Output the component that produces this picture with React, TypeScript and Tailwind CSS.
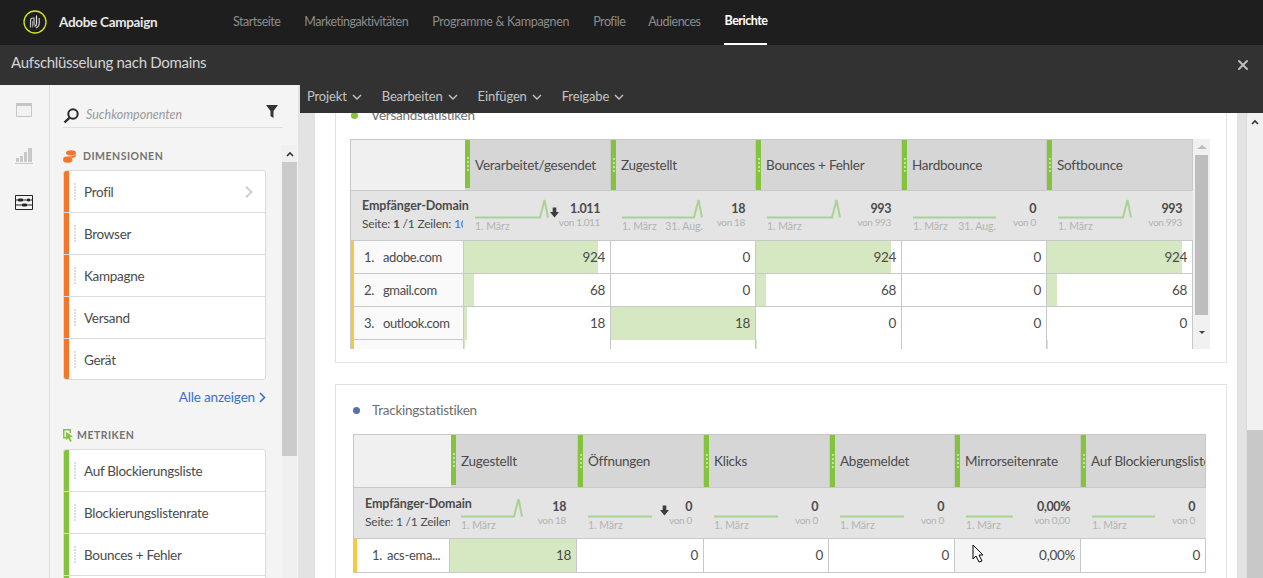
import React from "react";
import { X } from "lucide-react";

const Dots = () => (
  <div className="flex flex-col gap-[1px]">
    {[0, 1, 2, 3, 4, 5].map((i) => (
      <span key={i} className="block h-[2px] w-[2px] bg-[#dcdcdc]" />
    ))}
  </div>
);

const Chev = () => (
  <svg width="10" height="6" viewBox="0 0 10 6" fill="none" className="block">
    <path d="M1 1l4 4 4-4" stroke="#c4c4c4" strokeWidth="1.4" />
  </svg>
);

const SideItem = ({ label, bar, chevron, first, last }: { label: string; bar: string; chevron?: boolean; first?: boolean; last?: boolean }) => (
  <div className={`flex items-stretch bg-white ${first || last ? "h-[41px]" : "h-[42px]"} ${first ? "" : "border-t border-[#dcdcdc]"}`}>
    <div className={`w-[5px] ${bar}`} />
    <div className="ml-[5px] flex items-center">
      <Dots />
    </div>
    <div className="ml-2 flex flex-1 items-center pt-[2px] text-[13.5px] tracking-[-0.3px] text-[#4b4b4b]">{label}</div>
    {chevron && (
      <div className="flex items-center pr-[12px]">
        <svg width="8" height="12" viewBox="0 0 8 12" fill="none">
          <path d="M1 .8L6.4 6 1 11.2" stroke="#cfcfcf" strokeWidth="2" />
        </svg>
      </div>
    )}
  </div>
);

const Spark = ({ w, flat }: { w: number; flat?: boolean }) => (
  <svg width={w} height="20" viewBox={`0 0 ${w} 20`} fill="none" className="block">
    <path
      d={flat ? `M0 18.5H${w}` : `M0 18.5H${w - 9}L${w - 4.5} 1L${w - 1} 18.5`}
      stroke="#a9d293"
      strokeWidth="2"
    />
  </svg>
);

const HeadCell = ({ label, short }: { label: string; short?: boolean }) => (
  <div className="flex items-stretch overflow-hidden border-r border-[#c8c8c8] bg-[#d6d6d6]">
    <div className={`flex w-[5px] shrink-0 items-center justify-center bg-[#84c43c] ${short ? "mb-[2px]" : ""}`}>
      <div className="flex flex-col gap-[2px]">
        {[0, 1, 2, 3].map((i) => (
          <span key={i} className="block h-[2px] w-[2px] rounded-full bg-[#d9ecc5]" />
        ))}
      </div>
    </div>
    <div className="flex flex-1 items-center whitespace-nowrap pl-[5px] text-[13.5px] tracking-[-0.25px] text-[#4b4b4b]">{label}</div>
  </div>
);

type Sum = {
  w: number;
  value: string;
  von: string;
  pad: string;
  flat?: boolean;
  end?: boolean;
  arrow?: boolean;
};

const SumCell = ({ s, low }: { s: Sum; low?: boolean }) => (
  <div className={`flex justify-between ${s.pad}`}>
    <div className={low ? "pt-[10px]" : "pt-[8px]"} style={{ width: s.w }}>
      <Spark w={s.w} flat={s.flat} />
      <div className="flex justify-between whitespace-nowrap text-[10.5px] leading-[14px] text-[#b3b3b3]">
        <span>1. März</span>
        {s.end && <span>31. Aug.</span>}
      </div>
    </div>
    <div className="flex items-start">
      {s.arrow && (
        <svg width="9" height="11" viewBox="0 0 10 11" className={low ? "mt-[17px]" : "mt-[16px]"} fill="#3c3c3c">
          <path d="M3 0h4v5h3L5 11 0 5h3z" />
        </svg>
      )}
      <div className={`whitespace-nowrap text-right ${low ? "pt-[12px]" : "pt-[11px]"}`}>
        <div className="text-[12.5px] font-bold leading-[14px] tracking-[-0.4px] text-[#4b4b4b]">{s.value}</div>
        <div className="text-[10px] leading-[12px] tracking-[-0.35px] text-[#b3b3b3]">{s.von}</div>
      </div>
    </div>
  </div>
);

const Num = ({ v, pct, full, bg, nb }: { v: string; pct?: number; full?: boolean; bg?: string; nb?: boolean }) => (
  <div className={`relative flex items-center justify-end border-r border-[#c8c8c8] pr-[5px] text-[13.5px] tracking-[-0.3px] text-[#4b4b4b] ${nb ? "" : "border-b"} ${bg ?? "bg-white"}`}>
    {pct ? <div className="absolute inset-y-0 left-0 bg-[#d5e8c2]" style={{ width: pct }} /> : null}
    {full ? <div className="absolute inset-0 bg-[#d5e8c2]" /> : null}
    <span className="relative">{v}</span>
  </div>
);

const RowLabel = ({ n, name }: { n: string; name: string }) => (
  <div className="flex items-stretch border-b border-r border-[#c8c8c8] bg-[#fafafa]">
    <div className="w-[3px] bg-[#fcc73c]" />
    <div className="flex flex-1 items-center pl-[10px] pt-[2px] text-[13px] tracking-[-0.4px] text-[#4b4b4b]">
      <span className="w-[19px]">{n}</span>
      <span>{name}</span>
    </div>
  </div>
);

const VBar = () => (
  <div className="flex w-[17px] shrink-0 flex-col bg-[#f1f1f1]">
    <div className="flex h-[16px] items-center justify-center">
      <div className="h-0 w-0 border-x-[5px] border-b-[4px] border-x-transparent border-b-[#bdbdbd]" />
    </div>
    <div className="mx-[2px] h-[160px] bg-[#bdbdbd]" />
    <div className="flex flex-1 items-center justify-center">
      <div className="h-0 w-0 border-x-[3px] border-t-[3px] border-x-transparent border-t-[#444]" />
    </div>
  </div>
);

const table1: Sum[] = [
  { w: 74, value: "1.011", von: "von 1.011", arrow: true, pad: "pl-[10px] pr-[11px]" },
  { w: 81, value: "18", von: "von 18", end: true, pad: "pl-[11px] pr-[11px]" },
  { w: 74, value: "993", von: "von 993", pad: "pl-[11px] pr-[11px]" },
  { w: 83, value: "0", von: "von 0", flat: true, end: true, pad: "pl-[11px] pr-[11px]" },
  { w: 74, value: "993", von: "von 993", pad: "pl-[11px] pr-[11px]" },
];

const table2: Sum[] = [
  { w: 62, value: "18", von: "von 18", pad: "pl-[10px] pr-[12px]" },
  { w: 64, value: "0", von: "von 0", flat: true, arrow: true, pad: "pl-[10px] pr-[12px]" },
  { w: 64, value: "0", von: "von 0", flat: true, pad: "pl-[10px] pr-[12px]" },
  { w: 64, value: "0", von: "von 0", flat: true, pad: "pl-[10px] pr-[11px]" },
  { w: 47, value: "0,00%", von: "von 0,00", flat: true, pad: "pl-[11px] pr-[11px]" },
  { w: 63, value: "0", von: "von 0", flat: true, pad: "pl-[11px] pr-[11px]" },
];

export default function App() {
  return (
    <div className="relative flex h-[578px] w-[1263px] flex-col overflow-hidden bg-white font-['Lato',sans-serif]">
      {/* top bar */}
      <header className="flex h-[45px] shrink-0 items-center bg-[#1e1e1e]">
        <svg width="26" height="26" viewBox="0 0 26 26" className="ml-[22px]" fill="none">
          <circle cx="13" cy="12" r="11" stroke="#d2e41e" strokeWidth="1.3" />
          <path d="M8.5 17.5V10.5Q8.5 8 11 8H12V15.5" stroke="#c8c8c8" strokeWidth="1.2" />
          <path d="M10.5 17.5V11" stroke="#8a8a8a" strokeWidth="1" />
          <path d="M14.5 5.5V13.5Q14.5 16 12.5 16.5" stroke="#e2e2e2" strokeWidth="1.2" />
          <path d="M17.2 8V13.5Q17.2 16.5 14 18" stroke="#c8c8c8" strokeWidth="1.2" />
        </svg>
        <span className="ml-[11px] w-[174px] text-[13.5px] font-bold tracking-[-0.3px] text-[#e8e8e8]">Adobe Campaign</span>
        <nav className="flex h-full items-center gap-6 text-[12.5px] tracking-[-0.5px] text-[#8c8c8c]">
          <span>Startseite</span>
          <span>Marketingaktivitäten</span>
          <span className="tracking-[-0.3px]">Programme &amp; Kampagnen</span>
          <span>Profile</span>
          <span className="-ml-[1px]">Audiences</span>
          <span className="flex h-full items-center border-b-2 border-white font-bold text-white">Berichte</span>
        </nav>
      </header>

      {/* title */}
      <div className="flex h-[40px] shrink-0 items-center justify-between bg-[#323232] pl-[11px] pr-[12px]">
        <span className="pb-[6px] text-[15px] tracking-[-0.3px] text-[#d4d4d4]">Aufschlüsselung nach Domains</span>
        <X size={16} strokeWidth={3} className="text-[#bdbdbd]" />
      </div>

      <div className="flex min-h-0 flex-1">
        {/* rail */}
        <aside className="flex w-[50px] shrink-0 flex-col items-center border-r border-[#dedede] bg-[#f4f4f4] pr-[1px]">
          <svg width="16" height="14" viewBox="0 0 16 14" className="mt-[18px]" fill="none">
            <path d="M.5.5h15v13H.5z" stroke="#c6c6c6" fill="#f2f2f2" />
            <path d="M0 0h16v3H0z" fill="#c6c6c6" />
          </svg>
          <svg width="18" height="16" viewBox="0 0 18 16" className="mt-[31px]" fill="#c9c9c9">
            <rect x="1" y="10" width="3" height="4" />
            <rect x="5" y="8" width="3" height="6" />
            <rect x="9" y="4" width="3" height="10" />
            <rect x="13" y="0" width="4" height="14" />
            <rect x="0" y="15" width="18" height="1" />
          </svg>
          <svg width="18" height="15" viewBox="0 0 18 15" className="mt-[31px]" fill="none" stroke="#222">
            <path d="M.5.5h17v14H.5z" />
            <path d="M1 5h16M1 10h16" />
            <rect x="3" y="3.5" width="5" height="3" rx="1.2" fill="#222" stroke="none" />
            <rect x="12" y="3.5" width="3" height="3" rx="1.2" fill="#222" stroke="none" />
            <rect x="7" y="8.5" width="5" height="3" rx="1.2" fill="#222" stroke="none" />
          </svg>
        </aside>

        {/* components */}
        <aside className="flex w-[248px] shrink-0 bg-[#f4f4f4]">
          <div className="w-[232px] shrink-0 pl-[13px]">
            <div className="flex h-[43px] w-[220px] items-center justify-between border-b border-[#e0e0e0] pt-[15px]">
              <div className="flex items-center gap-[7px]">
                <svg width="16" height="16" viewBox="0 0 16 16" fill="none" className="mt-[4px]">
                  <circle cx="10" cy="6" r="4.7" stroke="#2c2c2c" strokeWidth="2" />
                  <path d="M6.4 9.8L1.5 14.5" stroke="#2c2c2c" strokeWidth="2.4" />
                </svg>
                <span className="pt-[3px] text-[12.5px] italic text-[#9a9a9a]">Suchkomponenten</span>
              </div>
              <svg width="12" height="13" viewBox="0 0 12 13" className="mb-[5px] mr-[5px]" fill="#333">
                <path d="M0 0h12L7.5 6v7l-3-2V6z" />
              </svg>
            </div>
            <div className="mt-[21px] flex h-[14px] items-center gap-[7px]">
              <svg width="13" height="13" viewBox="0 0 13 13" fill="#f3762a">
                <ellipse cx="8" cy="2.8" rx="5" ry="2.6" />
                <path d="M5 6.8C6.5 6.8 8 7.2 9 8c2.4-.2 3.9-1 3.9-2.2V4.2C12 5.4 10.2 6 8 6 6.800 6 5.800 5.800 5 5.500z" />
                <path d="M0 8.500C0 7.200 2 6.300 4.700 6.300S9.400 7.200 9.400 8.500v2C9.400 12 7.500 13 4.700 13S0 12 0 10.500z" stroke="#f4f4f4" strokeWidth="0.4" />
              </svg>
              <span className="pt-[2px] text-[10.5px] font-bold tracking-[0.5px] text-[#737373]">DIMENSIONEN</span>
            </div>
            <div className="mt-[7px] w-[203px] overflow-hidden rounded-[3px] border border-[#dcdcdc]">
              <SideItem label="Profil" bar="bg-[#f3762a]" chevron first />
              <SideItem label="Browser" bar="bg-[#f3762a]" />
              <SideItem label="Kampagne" bar="bg-[#f3762a]" />
              <SideItem label="Versand" bar="bg-[#f3762a]" />
              <SideItem label="Gerät" bar="bg-[#f3762a]" last />
            </div>
            <div className="mt-[7px] flex h-[20px] w-[203px] items-center justify-end gap-[4px] text-[13.5px] tracking-[-0.15px] text-[#3a6fd0]">
              Alle anzeigen
              <svg width="7" height="11" viewBox="0 0 7 11" fill="none">
                <path d="M1 1l4.500 4.500L1 10" stroke="#3a6fd0" strokeWidth="1.6" />
              </svg>
            </div>
            <div className="mt-[21px] flex h-[14px] items-center gap-[4px]">
              <svg width="10" height="13" viewBox="0 0 10 13" fill="#84c43c">
                <path d="M0 0h8v4H6.500V1.500h-5V8H3.500v1.500H0z" />
                <path d="M2.800 2.800L9.800 7.600 6.800 8.400 8.800 12 7.200 13 5.300 9.300 3.200 11.200z" />
              </svg>
              <span className="pt-[2px] text-[10.5px] font-bold tracking-[0.5px] text-[#737373]">METRIKEN</span>
            </div>
            <div className="mt-[7px] w-[203px] overflow-hidden rounded-[3px] border border-[#dcdcdc]">
              <SideItem label="Auf Blockierungsliste" bar="bg-[#84c43c]" first />
              <SideItem label="Blockierungslistenrate" bar="bg-[#84c43c]" />
              <SideItem label="Bounces + Fehler" bar="bg-[#84c43c]" />
              <SideItem label="" bar="bg-[#84c43c]" />
            </div>
          </div>
          <div className="mt-[60px] flex w-[15px] shrink-0 flex-col bg-[#f0f0f0]">
            <div className="flex h-[17px] items-center justify-center">
              <svg width="8" height="6" viewBox="0 0 8 6" fill="none">
                <path d="M1 5l3-3 3 3" stroke="#333" strokeWidth="1.6" />
              </svg>
            </div>
            <div className="h-[294px] bg-[#cbcbcb]" />
          </div>
        </aside>

        <div className="w-[2px] shrink-0 bg-[#e3e3e3]" />

        {/* right */}
        <div className="flex min-w-0 flex-1 flex-col">
          <div className="flex h-[28px] shrink-0 items-center gap-[20px] bg-[#323232] pb-[5px] pl-[7px] text-[13px] tracking-[-0.15px] text-[#c4c4c4]">
            <span className="flex items-center gap-[5px]">Projekt <Chev /></span>
            <span className="flex items-center gap-[5px]">Bearbeiten <Chev /></span>
            <span className="flex items-center gap-[5px]">Einfügen <Chev /></span>
            <span className="flex items-center gap-[5px]">Freigabe <Chev /></span>
          </div>
          <div className="flex min-h-0 flex-1">
            <div className="w-[15px] shrink-0 bg-[#e3e3e3]" />
            <main className="w-[922px] shrink-0 overflow-hidden bg-white">
              {/* card 1 */}
              <section className="-mt-[24px] ml-[20px] mr-[10px] h-[274px] border border-[#e2e2e2] pl-[14px] pt-[17px]">
                <div className="flex h-[16px] items-center gap-[13px] text-[13.5px] tracking-[-0.25px] text-[#6e6e6e]">
                  <span className="ml-[1px] block h-[7px] w-[7px] rounded-full bg-[#84c43c]" />
                  Versandstatistiken
                </div>
                <div className="mt-[16px] flex">
                  <div className="w-[843px] border-l border-t border-[#c8c8c8]">
                    <div className="grid h-[51px] grid-cols-[114px_146px_145px_146px_145px_146px] border-b border-[#c8c8c8]">
                      <div className="bg-[#f0f0f0]" />
                      {["Verarbeitet/gesendet", "Zugestellt", "Bounces + Fehler", "Hardbounce", "Softbounce"].map((h, i) => (
                        <HeadCell key={h} label={h} short={i === 0} />
                      ))}
                    </div>
                    <div className="grid h-[50px] grid-cols-[114px_146px_145px_146px_145px_146px] border-b border-[#c8c8c8] bg-[#e4e4e4]">
                      <div className="whitespace-nowrap pl-[11px] pt-[7px]">
                        <div className="text-[12.5px] font-bold leading-[16px] tracking-[-0.1px] text-[#4b4b4b]">Empfänger-Domain</div>
                        <div className="w-[101px] overflow-hidden text-[12px] leading-[20px] tracking-[-0.2px] text-[#4b4b4b]">
                          Seite: <b>1</b> /1 Zeilen: <span className="text-[#3a6fd0]">10</span>
                        </div>
                      </div>
                      {table1.map((s, i) => (
                        <SumCell key={i} s={s} />
                      ))}
                    </div>
                    <div className="grid h-[108px] grid-cols-[113px_147px_145px_146px_145px_146px] grid-rows-[33px_33px_33px_14px] overflow-hidden">
                      <RowLabel n="1." name="adobe.com" />
                      <Num v="924" pct={134} />
                      <Num v="0" />
                      <Num v="924" pct={135} />
                      <Num v="0" />
                      <Num v="924" pct={135} />

                      <RowLabel n="2." name="gmail.com" />
                      <Num v="68" pct={10} />
                      <Num v="0" />
                      <Num v="68" pct={10} />
                      <Num v="0" />
                      <Num v="68" pct={10} />

                      <RowLabel n="3." name="outlook.com" />
                      <Num v="18" pct={3} nb />
                      <Num v="18" full nb />
                      <Num v="0" nb />
                      <Num v="0" nb />
                      <Num v="0" nb />

                      <div className="flex border-r border-[#c8c8c8] bg-[#fafafa]">
                        <div className="w-[3px] bg-[#fcc73c]" />
                      </div>
                      <Num v="" pct={1} nb />
                      <Num v="" nb />
                      <Num v="" pct={1} nb />
                      <Num v="" nb />
                      <Num v="" pct={1} nb />
                    </div>
                  </div>
                  <VBar />
                </div>
              </section>

              {/* card 2 */}
              <section className="ml-[20px] mr-[10px] mt-[21px] h-[300px] border border-[#e2e2e2] pl-[17px] pt-[17px]">
                <div className="flex h-[16px] items-center gap-[12px] text-[13.5px] tracking-[-0.25px] text-[#6e6e6e]">
                  <span className="block h-[7px] w-[7px] rounded-full bg-[#5b6fb0]" />
                  Trackingstatistiken
                </div>
                <div className="mt-[16px] w-[853px] overflow-hidden border-b border-l border-t border-[#c8c8c8]">
                  <div className="grid h-[53px] grid-cols-[97px_127px_126px_126px_125px_126px_125px] border-b border-[#c8c8c8]">
                    <div className="bg-[#f0f0f0]" />
                    {["Zugestellt", "Öffnungen", "Klicks", "Abgemeldet", "Mirrorseitenrate", "Auf Blockierungsliste"].map((h, i) => (
                      <HeadCell key={h} label={h} short={i === 0} />
                    ))}
                  </div>
                  <div className="grid h-[51px] grid-cols-[97px_127px_126px_126px_125px_126px_125px] border-b border-[#c8c8c8] bg-[#e4e4e4]">
                    <div className="whitespace-nowrap pl-[11px] pt-[8px]">
                      <div className="text-[12.5px] font-bold leading-[16px] tracking-[-0.1px] text-[#4b4b4b]">Empfänger-Domain</div>
                      <div className="w-[85px] overflow-hidden text-[12px] leading-[20px] tracking-[-0.2px] text-[#4b4b4b]">Seite: 1 /1 Zeilen</div>
                    </div>
                    {table2.map((s, i) => (
                      <SumCell key={i} s={s} low />
                    ))}
                  </div>
                  <div className="grid h-[33px] grid-cols-[96px_127px_127px_125px_126px_126px_125px]">
                    <div className="flex items-stretch border-r border-[#c8c8c8] bg-white">
                      <div className="w-[3px] bg-[#fcc73c]" />
                      <div className="flex flex-1 items-center gap-[5px] pl-[15px] text-[13px] tracking-[-0.3px] text-[#4b4b4b]">
                        <span>1.</span>
                        <span>acs-ema...</span>
                      </div>
                    </div>
                    <Num v="18" full nb />
                    <Num v="0" nb />
                    <Num v="0" nb />
                    <Num v="0" nb />
                    <Num v="0,00%" bg="bg-[#f5f5f5]" nb />
                    <Num v="0" nb />
                  </div>
                </div>
              </section>
            </main>
            <div className="w-[9px] shrink-0 bg-[#e3e3e3]" />
            <div className="flex w-[17px] shrink-0 flex-col border-l border-[#dcdcdc] bg-[#f1f1f1]">
              <div className="flex h-[17px] items-center justify-center">
                <svg width="8" height="6" viewBox="0 0 8 6" fill="none">
                  <path d="M1 5l3-3 3 3" stroke="#333" strokeWidth="1.6" />
                </svg>
              </div>
              <div className="mt-[300px] flex-1 bg-[#c8c8c8]" />
            </div>
          </div>
        </div>
      </div>

      {/* cursor */}
      <svg width="14" height="20" viewBox="0 0 14 20" className="absolute left-[972px] top-[544px]" fill="#fff" stroke="#000" strokeWidth="1">
        <path d="M1 1v14l3-3 3 6 3-1-3-6h4z" />
      </svg>
    </div>
  );
}
